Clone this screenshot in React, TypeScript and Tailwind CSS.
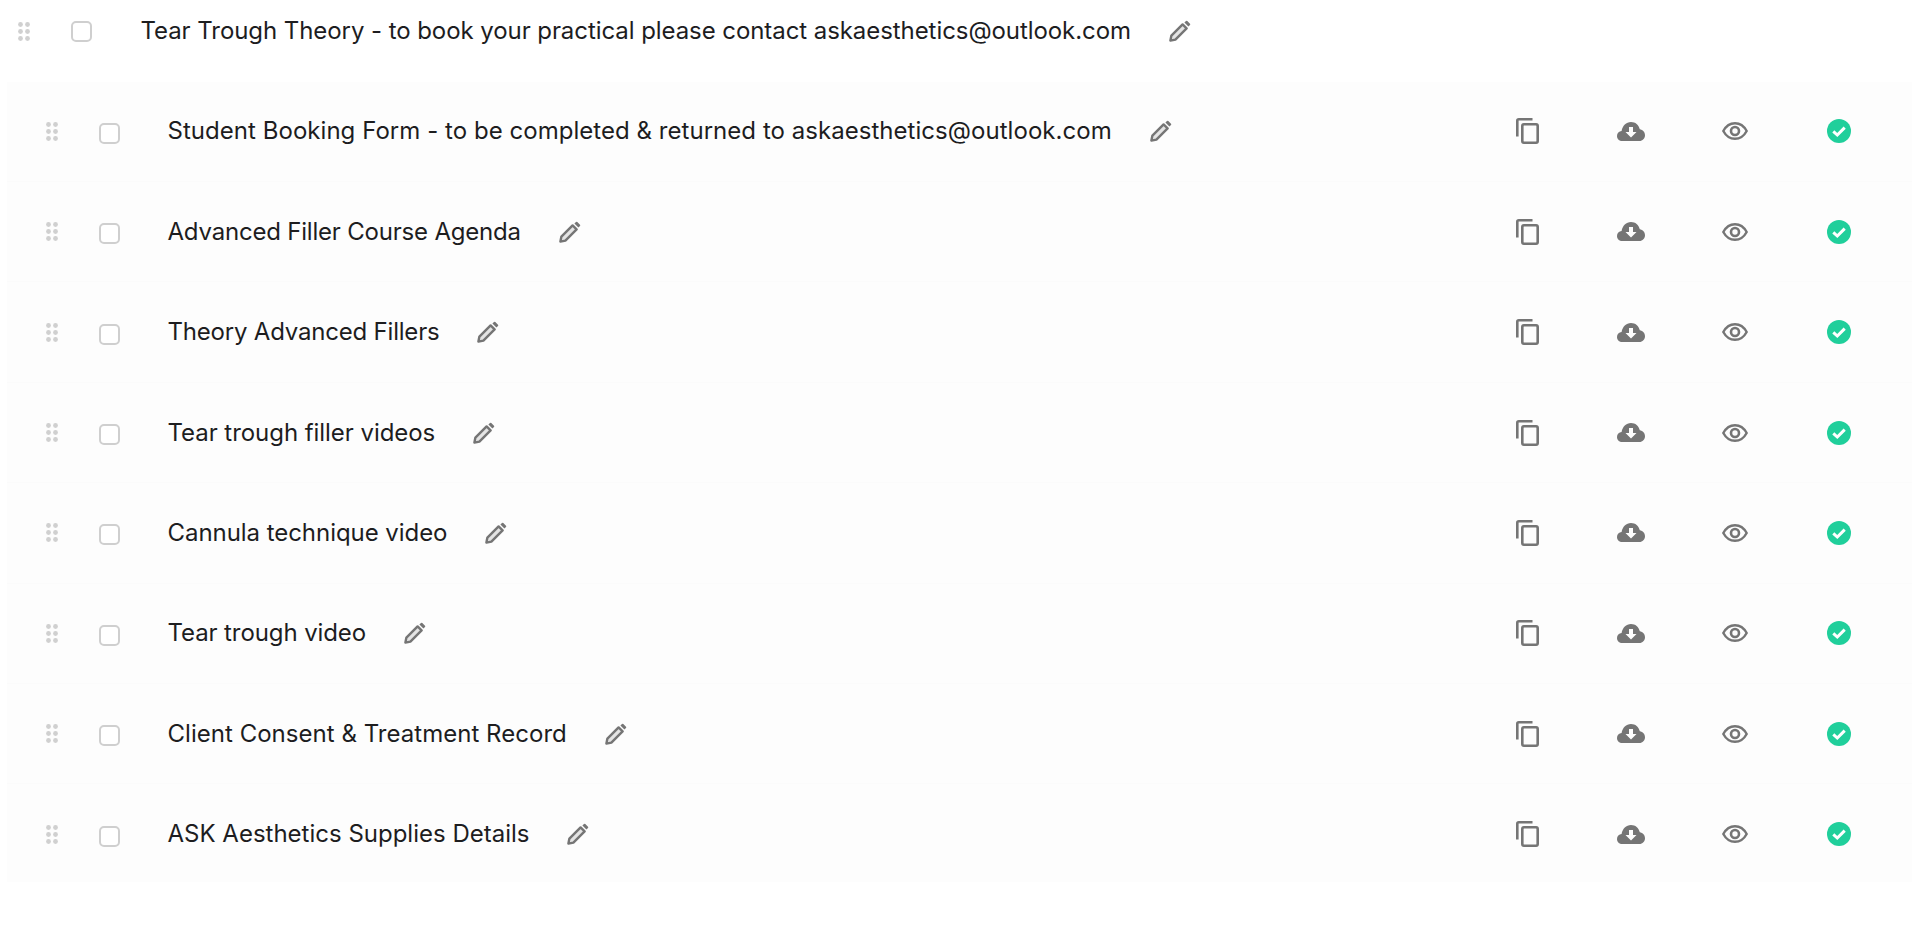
const lessons = [
  { title: 'Student Booking Form - to be completed & returned to askaesthetics@outlook.com', tracking: 'tracking-[0.04px]' },
  { title: 'Advanced Filler Course Agenda', tracking: 'tracking-[-0.2px]' },
  { title: 'Theory Advanced Fillers', tracking: 'tracking-[-0.2px]' },
  { title: 'Tear trough filler videos', tracking: 'tracking-[-0.05px]' },
  { title: 'Cannula technique video', tracking: 'tracking-[-0.05px]' },
  { title: 'Tear trough video', tracking: 'tracking-[-0.1px]' },
  { title: 'Client Consent & Treatment Record', tracking: 'tracking-[0.03px]' },
  { title: 'ASK Aesthetics Supplies Details', tracking: 'tracking-normal' },
];

function DragHandle() {
  return (
    <svg width="12" height="19" viewBox="0 0 12 19" fill="#d0d0d0" className="shrink-0">
      <circle cx="2.5" cy="2.5" r="2.4" />
      <circle cx="9.5" cy="2.5" r="2.4" />
      <circle cx="2.5" cy="9.5" r="2.4" />
      <circle cx="9.5" cy="9.5" r="2.4" />
      <circle cx="2.5" cy="16.5" r="2.4" />
      <circle cx="9.5" cy="16.5" r="2.4" />
    </svg>
  );
}

function Checkbox({ className = '' }: { className?: string }) {
  return <div className={`w-[21px] h-[21px] shrink-0 rounded-[5px] border-2 border-[#cfcfcf] bg-white ${className}`} />;
}

function Pencil() {
  return (
    <svg width="22" height="22" viewBox="0 0 22 22" className="shrink-0">
      <path d="M1.4 20.6 L2.4 15.6 L13.6 4.4 L17.6 8.4 L6.4 19.6 Z" fill="#e4e4e4" stroke="#757575" strokeWidth="2.4" strokeLinejoin="round" />
      <path d="M15.4 2.6 L17 1 Q17.6 .4 18.3 1 L21 3.7 Q21.6 4.4 21 5 L19.4 6.6 Z" fill="#757575" />
    </svg>
  );
}

function CopyIcon() {
  return (
    <svg width="23" height="26" viewBox="0 0 23 26" fill="none" stroke="#757575" strokeWidth="2.6" className="block">
      <path d="M16.5 1.3 H2.8 Q1.3 1.3 1.3 2.8 V18.5" />
      <rect x="6.3" y="6.3" width="15.4" height="18.4" rx="1.6" />
    </svg>
  );
}

function CloudIcon() {
  return (
    <svg width="28" height="19" viewBox="0 0 28 19" className="block">
      <path
        d="M5 19 C2 19 0 16.8 0 14 C0 11.3 2 9.2 4.6 9 C5.4 3.8 9.2 0 14 0 C18.4 0 21.7 2.8 22.8 7.2 C25.8 7.6 28 10 28 13.2 C28 16.4 25.5 19 22.4 19 Z"
        fill="#757575"
      />
      <path d="M12 5 H16 V10 H19.5 L14 15.5 L8.5 10 H12 Z" fill="#fdfdfd" />
    </svg>
  );
}

function EyeIcon() {
  return (
    <svg width="26" height="18" viewBox="0 0 26 18" fill="none" stroke="#757575" strokeWidth="2.4" className="block">
      <path d="M1.3 9 C4 4 8 1.2 13 1.2 C18 1.2 22 4 24.7 9 C22 14 18 16.8 13 16.8 C8 16.8 4 14 1.3 9 Z" />
      <circle cx="13" cy="9" r="4" strokeWidth="2.6" />
    </svg>
  );
}

function CheckIcon() {
  return (
    <svg width="24" height="24" viewBox="0 0 24 24" className="block">
      <circle cx="12" cy="12" r="12" fill="#20cf9b" />
      <path d="M6.3 12.3 L10.3 16 L17.7 8.6" fill="none" stroke="#ffffff" strokeWidth="3" />
    </svg>
  );
}

export default function App() {
  return (
    <div className="min-h-[935px] bg-white text-[#1d1d1f] font-['Inter',sans-serif] text-[24px] leading-[30px] overflow-hidden">
      <div className="h-[81.7px] flex items-start pt-[16px] pl-[18px]">
        <div className="flex items-center">
          <DragHandle />
          <div className="w-[41px] shrink-0" />
          <Checkbox />
          <div className="ml-[48.5px] mr-[38px] whitespace-nowrap tracking-[-0.07px]">
            Tear Trough Theory - to book your practical please contact askaesthetics@outlook.com
          </div>
          <Pencil />
        </div>
      </div>

      <div className="ml-[7px] mr-[8px] h-[800px] overflow-hidden bg-[#fdfdfd]">
        {lessons.map(({ title, tracking }, i) => (
          <div key={i} className="h-[100.4px] flex items-center pl-[39px] border-b border-[#fbfbfb]">
            <DragHandle />
            <div className="w-[40.5px] shrink-0" />
            <Checkbox className="mt-[4px]" />
            <div className={`ml-[48px] mr-[38px] whitespace-nowrap ${tracking}`}>{title}</div>
            <Pencil />
            <div className="ml-auto flex items-center pr-[61px]">
              <div className="w-[101px]"><CopyIcon /></div>
              <div className="w-[105px]"><CloudIcon /></div>
              <div className="w-[105px]"><EyeIcon /></div>
              <div><CheckIcon /></div>
            </div>
          </div>
        ))}
      </div>
    </div>
  );
}
